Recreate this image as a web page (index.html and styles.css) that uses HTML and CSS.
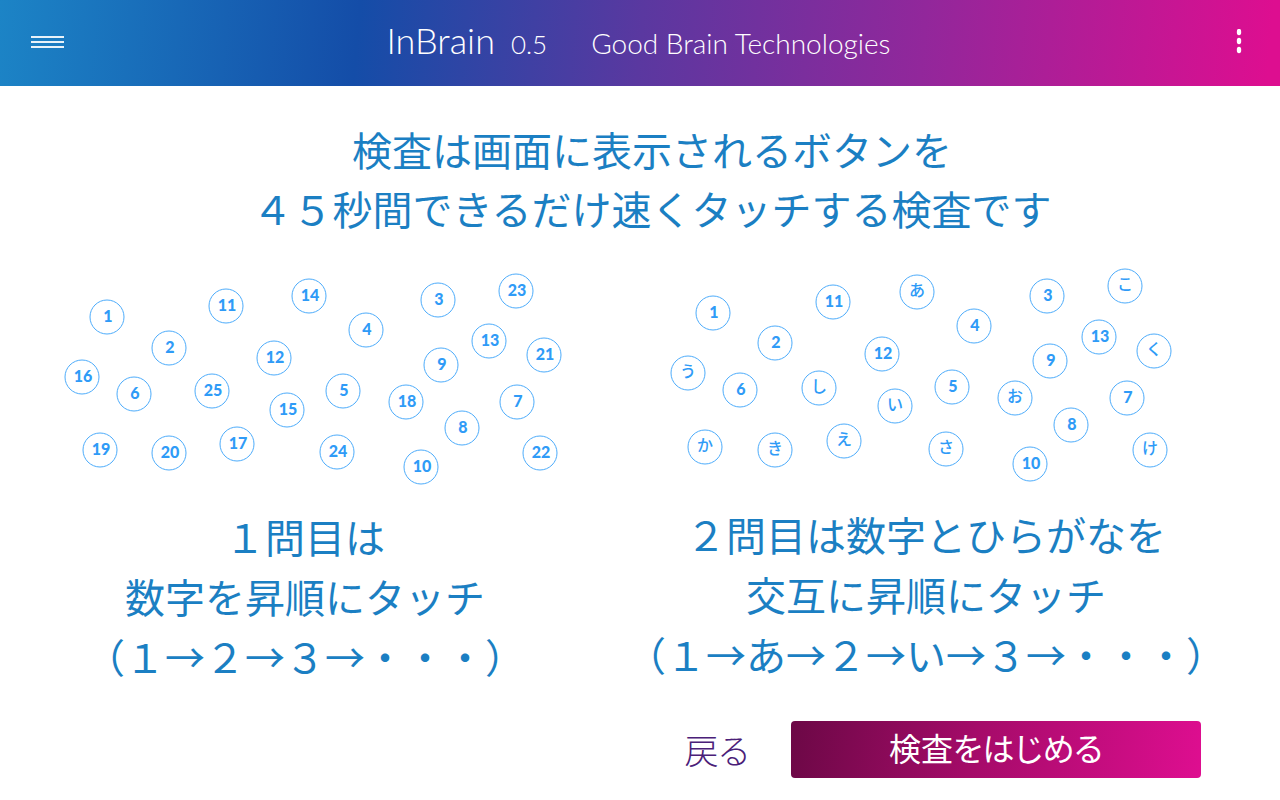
FILE: index.html
```html
<!DOCTYPE html>
<html lang="ja">
<head>
<meta charset="utf-8">
<meta name="viewport" content="width=device-width, initial-scale=1">
<title>InBrain 0.5</title>
<link rel="stylesheet" href="styles.css">
</head>
<body>
<header class="bar">
  <button class="icon-button" type="button" aria-label="メニュー">
    <svg width="34" height="14" viewBox="0 0 34 14"><path d="M0 2H33M0 7H33M0 12H33" stroke="#fff" stroke-width="2" stroke-opacity=".9"/></svg>
  </button>
  <div class="brand">
    <span class="brand-name">InBrain</span>
    <span class="brand-version">0.5</span>
    <span class="brand-company">Good Brain Technologies</span>
  </div>
  <button class="icon-button" type="button" aria-label="その他">
    <svg width="6" height="26" viewBox="0 0 6 26" fill="#fff"><ellipse cx="3" cy="3" rx="2.2" ry="3.3"/><ellipse cx="3" cy="12" rx="2.2" ry="3.3"/><ellipse cx="3" cy="21" rx="2.2" ry="3.3"/></svg>
  </button>
</header>
<main>
  <h1 class="lead">検査は画面に表示されるボタンを<br>４５秒間できるだけ速くタッチする検査です</h1>
  <div class="tests">
    <section class="test">
      <svg class="board" viewBox="0 0 540 240">
        <g transform="translate(72 57)"><circle r="17"/><text x="1" y="5">1</text></g>
        <g transform="translate(134 88)"><circle r="17"/><text x="1" y="5">2</text></g>
        <g transform="translate(403 40)"><circle r="17"/><text x="1" y="5">3</text></g>
        <g transform="translate(331 70)"><circle r="17"/><text x="1" y="5">4</text></g>
        <g transform="translate(308 131)"><circle r="17"/><text x="1" y="5">5</text></g>
        <g transform="translate(99 134)"><circle r="17"/><text x="1" y="5">6</text></g>
        <g transform="translate(482 142)"><circle r="17"/><text x="1" y="5">7</text></g>
        <g transform="translate(427 168)"><circle r="17"/><text x="1" y="5">8</text></g>
        <g transform="translate(406 105)"><circle r="17"/><text x="1" y="5">9</text></g>
        <g transform="translate(386 207)"><circle r="17"/><text x="1" y="5">10</text></g>
        <g transform="translate(191 46)"><circle r="17"/><text x="1" y="5">11</text></g>
        <g transform="translate(239 98)"><circle r="17"/><text x="1" y="5">12</text></g>
        <g transform="translate(454 81)"><circle r="17"/><text x="1" y="5">13</text></g>
        <g transform="translate(274 36)"><circle r="17"/><text x="1" y="5">14</text></g>
        <g transform="translate(252 150)"><circle r="17"/><text x="1" y="5">15</text></g>
        <g transform="translate(47 117)"><circle r="17"/><text x="1" y="5">16</text></g>
        <g transform="translate(202 184)"><circle r="17"/><text x="1" y="5">17</text></g>
        <g transform="translate(371 142)"><circle r="17"/><text x="1" y="5">18</text></g>
        <g transform="translate(65 190)"><circle r="17"/><text x="1" y="5">19</text></g>
        <g transform="translate(134 193)"><circle r="17"/><text x="1" y="5">20</text></g>
        <g transform="translate(509 95)"><circle r="17"/><text x="1" y="5">21</text></g>
        <g transform="translate(505 193)"><circle r="17"/><text x="1" y="5">22</text></g>
        <g transform="translate(481 31)"><circle r="17"/><text x="1" y="5">23</text></g>
        <g transform="translate(302 192)"><circle r="17"/><text x="1" y="5">24</text></g>
        <g transform="translate(177 131)"><circle r="17"/><text x="1" y="5">25</text></g>
      </svg>
      <p class="caption">１問目は<br>数字を昇順にタッチ<br>（１→２→３→・・・）</p>
    </section>
    <section class="test">
      <svg class="board" viewBox="0 0 540 238">
        <g transform="translate(57 53)"><circle r="17"/><text x="1" y="5">1</text></g>
        <g transform="translate(119 83)"><circle r="17"/><text x="1" y="5">2</text></g>
        <g transform="translate(391 36)"><circle r="17"/><text x="1" y="5">3</text></g>
        <g transform="translate(318 66)"><circle r="17"/><text x="1" y="5">4</text></g>
        <g transform="translate(296 127)"><circle r="17"/><text x="1" y="5">5</text></g>
        <g transform="translate(84 130)"><circle r="17"/><text x="1" y="5">6</text></g>
        <g transform="translate(471 138)"><circle r="17"/><text x="1" y="5">7</text></g>
        <g transform="translate(415 165)"><circle r="17"/><text x="1" y="5">8</text></g>
        <g transform="translate(394 101)"><circle r="17"/><text x="1" y="5">9</text></g>
        <g transform="translate(374 204)"><circle r="17"/><text x="1" y="5">10</text></g>
        <g transform="translate(177 42)"><circle r="17"/><text x="1" y="5">11</text></g>
        <g transform="translate(226 94)"><circle r="17"/><text x="1" y="5">12</text></g>
        <g transform="translate(443 77)"><circle r="17"/><text x="1" y="5">13</text></g>
        <g class="kana" transform="translate(261 32)"><circle r="17"/><text x="0" y="4">あ</text></g>
        <g class="kana" transform="translate(239 146)"><circle r="17"/><text x="0" y="4">い</text></g>
        <g class="kana" transform="translate(32 113)"><circle r="17"/><text x="0" y="4">う</text></g>
        <g class="kana" transform="translate(188 181)"><circle r="17"/><text x="0" y="4">え</text></g>
        <g class="kana" transform="translate(359 138)"><circle r="17"/><text x="0" y="4">お</text></g>
        <g class="kana" transform="translate(49 187)"><circle r="17"/><text x="0" y="4">か</text></g>
        <g class="kana" transform="translate(119 190)"><circle r="17"/><text x="0" y="4">き</text></g>
        <g class="kana" transform="translate(498 91)"><circle r="17"/><text x="0" y="4">く</text></g>
        <g class="kana" transform="translate(494 190)"><circle r="17"/><text x="0" y="4">け</text></g>
        <g class="kana" transform="translate(469 26)"><circle r="17"/><text x="0" y="4">こ</text></g>
        <g class="kana" transform="translate(290 189)"><circle r="17"/><text x="0" y="4">さ</text></g>
        <g class="kana" transform="translate(163 128)"><circle r="17"/><text x="0" y="4">し</text></g>
      </svg>
      <p class="caption">２問目は数字とひらがなを<br>交互に昇順にタッチ<br>（１→あ→２→い→３→・・・）</p>
    </section>
  </div>
  <div class="actions">
    <button class="back" type="button">戻る</button>
    <button class="start" type="button">検査をはじめる</button>
  </div>
</main>
</body>
</html>
```
FILE: styles.css
```css
* { box-sizing: border-box; }

body {
  margin: 0;
  background: #fff;
  color: #1b7fc3;
  font-family: "Noto Sans CJK JP", sans-serif;
}

button {
  border: 0;
  padding: 0;
  background: none;
  font: inherit;
  cursor: pointer;
}

.bar {
  display: flex;
  align-items: center;
  justify-content: space-between;
  height: 86px;
  padding: 0 38px 2px 31px;
  background: linear-gradient(95deg, #1c84c6 0%, #144da8 28%, #5a38a0 50%, #92279b 72%, #dd0e90 99%);
}

.icon-button svg { display: block; }

.brand {
  display: flex;
  align-items: baseline;
  margin-right: 24px;
  color: #fff;
  font-family: Lato, sans-serif;
  font-weight: 300;
  line-height: 48px;
  white-space: nowrap;
}

.brand-name { font-size: 36px; }
.brand-version { margin-left: 16px; font-size: 26px; }
.brand-company { margin-left: 44px; font-size: 28px; }

.lead {
  margin: 0;
  padding: 34px 0 0 24px;
  font-size: 40px;
  font-weight: 400;
  line-height: 59px;
  text-align: center;
}

.tests {
  display: grid;
  grid-template-columns: 610fr 632fr;
  padding: 22px 38px 0 0;
}

.test { text-align: center; }

.board {
  display: block;
  width: 100%;
  max-width: 540px;
  margin: 0 auto;
}

.board circle { fill: #fff; stroke: #4dacfb; stroke-width: 1; }

.board text {
  fill: #2f9bf7;
  font-family: Lato, sans-serif;
  font-size: 16px;
  font-weight: 900;
  text-anchor: middle;
}

.board .kana text {
  font-family: "Noto Sans CJK JP", sans-serif;
  font-weight: 500;
}

.caption {
  margin: 6px 0 0;
  font-size: 40px;
  line-height: 60px;
  white-space: nowrap;
}

.actions {
  display: flex;
  justify-content: flex-end;
  align-items: center;
  gap: 42px;
  padding: 35px 79px 22px 0;
  font-size: 34px;
  line-height: 57px;
  font-feature-settings: "palt";
}

.back { color: #4a2078; font-weight: 300; }

.start {
  width: 410px;
  padding-bottom: 5px;
  border-radius: 4px;
  background: linear-gradient(98deg, #6c0846 0%, #a50b69 45%, #de0e90 100%);
  color: #fff;
  font-size: 32px;
  line-height: 52px;
}
```
